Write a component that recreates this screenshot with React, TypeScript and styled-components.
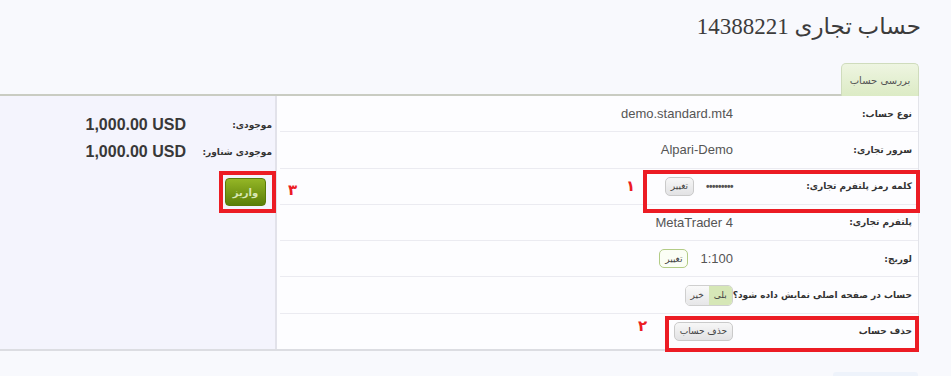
import React from "react";
import styled, { createGlobalStyle } from "styled-components";

const GlobalStyle = createGlobalStyle`
  html, body {
    margin: 0;
    padding: 0;
    background: #f8f9fd;
  }
  body {
    font-family: "DejaVu Sans", "Liberation Sans", sans-serif;
    color: #333;
  }
`;

const persian = `"DejaVu Sans", sans-serif`;

const accountRows = [
  { label: "نوع حساب:", value: "demo.standard.mt4" },
  { label: "سرور تجاری:", value: "Alpari-Demo" },
  { label: "کلمه رمز پلتفرم تجاری:", value: "•••••••••", dots: true, action: "تغییر" },
  { label: "پلتفرم تجاری:", value: "MetaTrader 4" },
  { label: "لوریج:", value: "1:100", action: "تغییر", green: true },
  { label: "حساب در صفحه اصلی نمایش داده شود؟", toggle: true },
  { label: "حذف حساب", action: "حذف حساب" },
];

export default function App() {
  return (
    <>
      <GlobalStyle />
      <Page>
        <Header>
          <Title>حساب تجاری 14388221</Title>
        </Header>
        <TabBar>
          <TabLine />
          <Tab>بررسی حساب</Tab>
          <TabSpacer />
        </TabBar>
        <Panel>
          <Balance>
            <BalanceGrid>
              <BalanceLabel>موجودی:</BalanceLabel>
              <BalanceValue>1,000.00 USD</BalanceValue>
              <BalanceLabel>موجودی شناور:</BalanceLabel>
              <BalanceValue>1,000.00 USD</BalanceValue>
            </BalanceGrid>
            <DepositButton>واریز</DepositButton>
          </Balance>
          <Details>
            {accountRows.map((row) => (
              <Row key={row.label}>
                <Label>{row.label}</Label>
                <Value>
                  {row.value && <ValueText $dots={row.dots}>{row.value}</ValueText>}
                  {row.toggle && (
                    <Toggle>
                      <ToggleOption $active>بلی</ToggleOption>
                      <ToggleOption>خیر</ToggleOption>
                    </Toggle>
                  )}
                  {row.action && <SmallButton $green={row.green}>{row.action}</SmallButton>}
                </Value>
              </Row>
            ))}
          </Details>
        </Panel>
        <Footer>
          <FooterTab />
        </Footer>

        <Marker style={{ left: 643, top: 170, width: 277, height: 43 }} />
        <Marker style={{ left: 665, top: 316, width: 254, height: 36 }} />
        <Marker style={{ left: 219, top: 171, width: 57, height: 42 }} />
        <Note style={{ left: 626, top: 177 }}>۱</Note>
        <Note style={{ left: 638, top: 317 }}>۲</Note>
        <Note style={{ left: 288, top: 181 }}>۳</Note>
      </Page>
    </>
  );
}

const Page = styled.div`
  position: relative;
  width: 951px;
  height: 376px;
  overflow: hidden;
`;

const Header = styled.div`
  display: flex;
  justify-content: flex-end;
  padding: 13px 30px 0 0;
  height: 52px;
  box-sizing: border-box;
`;

const Title = styled.h1`
  margin: 0;
  font-family: "Liberation Serif", ${persian};
  font-weight: normal;
  font-size: 23px;
  color: #3c3c3c;
  direction: rtl;
`;

const TabBar = styled.div`
  display: flex;
  align-items: flex-end;
  height: 44px;
`;

const TabLine = styled.div`
  flex: 1;
  border-bottom: 2px solid #c9ccc2;
`;

const Tab = styled.div`
  width: 78px;
  height: 33px;
  box-sizing: border-box;
  display: flex;
  align-items: center;
  justify-content: center;
  border: 1px solid #cfdcbc;
  border-bottom: none;
  border-radius: 5px 5px 0 0;
  background: linear-gradient(#eef5e1, #dcebc5);
  font-family: ${persian};
  font-size: 10px;
  color: #555;
  direction: rtl;
`;

const TabSpacer = styled.div`
  width: 32px;
`;

const Panel = styled.div`
  display: flex;
  width: 918px;
  height: 253px;
  border-right: 1px solid #e3e4ea;
  border-bottom: 2px solid #dcdde2;
`;

const Balance = styled.div`
  width: 277px;
  background: #f4f4fd;
  border-right: 2px solid #e2e2ea;
  padding: 15px 3px 0 0;
  box-sizing: border-box;
  display: flex;
  flex-direction: column;
  align-items: flex-end;
`;

const BalanceGrid = styled.div`
  display: grid;
  grid-template-columns: 86px auto;
  grid-auto-rows: 27px;
  direction: rtl;
  align-items: center;
`;

const BalanceLabel = styled.div`
  font-family: ${persian};
  font-weight: bold;
  font-size: 9px;
  color: #333;
`;

const BalanceValue = styled.div`
  font-family: "Liberation Sans", Arial, sans-serif;
  font-weight: bold;
  font-size: 16px;
  color: #383838;
  direction: ltr;
`;

const DepositButton = styled.button`
  margin: 13px 6px 0 0;
  width: 41px;
  height: 28px;
  border: 1px solid #5a7a08;
  border-radius: 4px;
  background: linear-gradient(#94b626, #5b7e08);
  color: #d9e7b4;
  font-family: ${persian};
  font-weight: bold;
  font-size: 10px;
  padding: 0;
`;

const Details = styled.div`
  flex: 1;
  display: flex;
  flex-direction: column;
  background: #fdfdff;
  padding-left: 3px;
`;

const Row = styled.div`
  flex: 1;
  display: flex;
  direction: rtl;
  align-items: center;
  box-sizing: border-box;
  padding-right: 6px;
  border-bottom: 1px solid #ebebf1;
  &:last-child {
    border-bottom: none;
  }
`;

const Label = styled.div`
  min-width: 179px;
  white-space: nowrap;
  font-family: ${persian};
  font-weight: bold;
  font-size: 9px;
  color: #333;
`;

const Value = styled.div`
  display: flex;
  align-items: center;
  gap: 12px;
`;

const ValueText = styled.span<{ $dots?: boolean }>`
  direction: ltr;
  font-family: "Liberation Sans", Arial, sans-serif;
  font-size: ${(p) => (p.$dots ? "10px" : "13px")};
  font-weight: ${(p) => (p.$dots ? "bold" : "normal")};
  letter-spacing: ${(p) => (p.$dots ? "-0.5px" : "0")};
  color: #555;
`;

const SmallButton = styled.button<{ $green?: boolean }>`
  height: 19px;
  padding: 0 5px;
  border-radius: 5px;
  border: 1px solid ${(p) => (p.$green ? "#b3cc86" : "#cacaca")};
  background: ${(p) => (p.$green ? "#fbfef5" : "linear-gradient(#f7f7f7, #e2e2e4)")};
  font-family: ${persian};
  font-size: 9px;
  color: #444;
  direction: rtl;
`;

const Toggle = styled.div`
  display: flex;
  height: 19px;
  border: 1px solid #cfcfcf;
  border-radius: 5px;
  overflow: hidden;
`;

const ToggleOption = styled.span<{ $active?: boolean }>`
  display: flex;
  align-items: center;
  padding: 0 5px;
  font-family: ${persian};
  font-size: 9px;
  color: #444;
  background: ${(p) => (p.$active ? "#d6e7b7" : "linear-gradient(#fafafa, #e6e6e8)")};
`;

const Footer = styled.div`
  display: flex;
  justify-content: flex-end;
  padding: 21px 33px 0 0;
`;

const FooterTab = styled.div`
  width: 85px;
  height: 10px;
  background: #eef3fb;
  border-radius: 3px 3px 0 0;
`;

const Marker = styled.div`
  position: absolute;
  box-sizing: border-box;
  border: 4px solid #ec1c24;
`;

const Note = styled.div`
  position: absolute;
  font-family: ${persian};
  font-size: 15px;
  font-weight: bold;
  color: #ec1c24;
`;
